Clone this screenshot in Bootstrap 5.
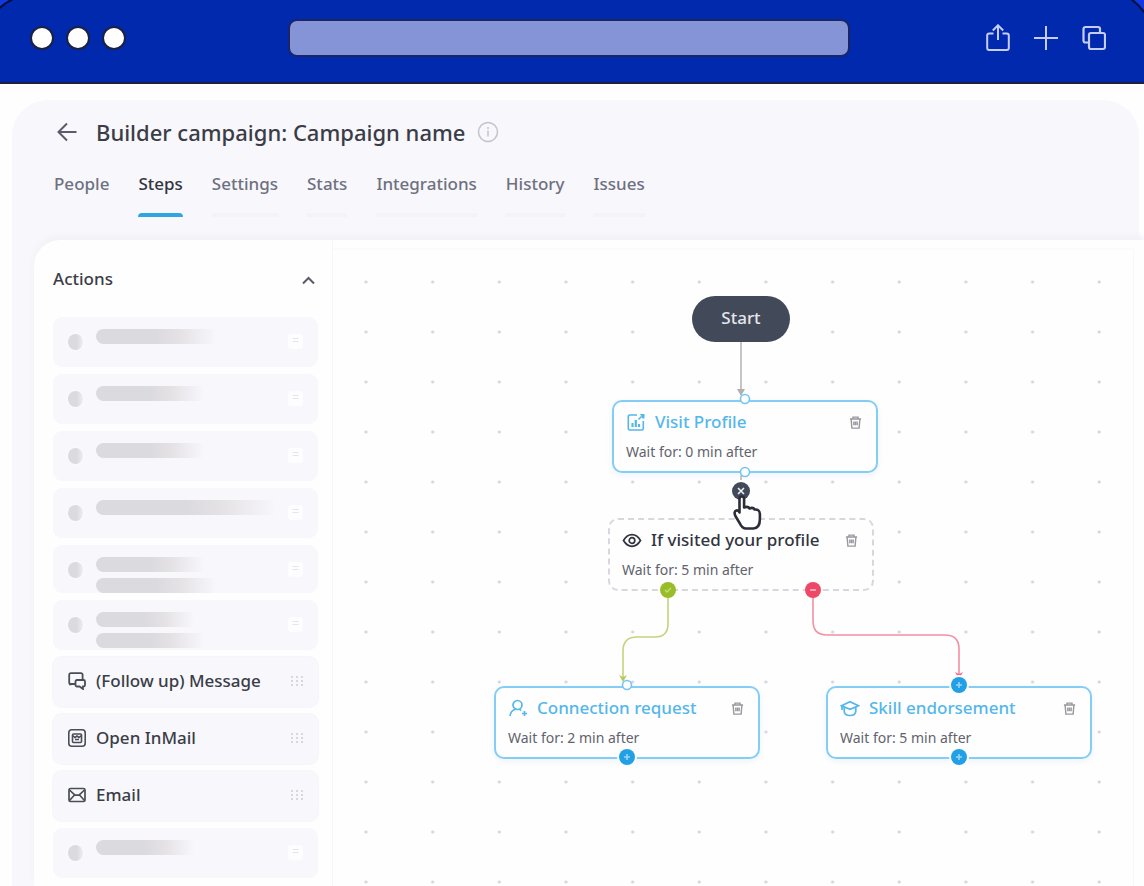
<!DOCTYPE html>
<html lang="en">
<head>
<meta charset="utf-8">
<meta name="viewport" content="width=device-width, initial-scale=1">
<title>Builder campaign</title>
<link href="https://cdn.jsdelivr.net/npm/bootstrap@5.3.0/dist/css/bootstrap.min.css" rel="stylesheet">
<style>
  body { font-family: "Noto Sans", "Open Sans", sans-serif; color: #3a3d46; background: #fefefe; overflow: hidden; }
  .window-bar { background: #0029ad; border-bottom: 2px solid #1b2142; height: 84px; padding: 0 38px 6px 30px; }
  .window-dots { gap: 12px; }
  .window-dot { width: 24px; height: 24px; border-radius: 50%; background: #fff; border: 2px solid #1b2142; }
  .address { width: 562px; height: 38px; margin-left: 26px; border: 2px solid #1b2464; border-radius: 9px; background: #8494d6; }
  .bar-btn { color: #c6cdf8; line-height: 0; }
  .bar-btn svg { width: 24px; height: 28px; }
  .corner { top: 0; width: 24px; height: 24px; }
  .app-panel { margin: 16px 5px 0 12px; background: #f7f7fc; border-radius: 36px 36px 0 0; padding: 16px 0 0 22px; }
  .page-title { font-size: 22px; line-height: 32px; font-weight: 500; }
  .info { margin-left: 12px; }
  .back-link { color: #5a5a6b; margin-left: 22px; margin-right: 18px; line-height: 0; }
  .tabs { margin-left: 20px; gap: 29px; }
  .tabs a { display: block; font-size: 17px; line-height: 24px; font-weight: 500; color: #6e717e; text-decoration: none; padding: 24px 0 17px; border-bottom: 4px solid transparent; position: relative; }
  .tabs a.current { color: #32353f; }
  .tabs a::after { content: ""; position: absolute; left: 0; right: 0; bottom: -4px; height: 4px; background: #f3f3f8; }
  .tabs li:first-child a::after { display: none; }
  .tabs a.current::after { background: #30a5e2; border-radius: 4px 4px 0 0; }
  .workspace { background: #fefefe; border-radius: 26px 0 0 0; margin-right: -5px; margin-top: 23px; box-shadow: 0 -4px 6px #f1f1f6; }
  .side { width: 299px; border-right: 1px solid #f6f6fc; padding: 27px 14px 8px 19px; }
  .side-head { font-size: 17px; line-height: 24px; font-weight: 500; margin-bottom: 26px; }
  .action-list { gap: 7px; }
  .action-card { height: 50px; background: #f7f7fc; border-radius: 9px; padding: 0 15px 2px; font-size: 17px; font-weight: 500; }
  button.action-card { border: 0; text-align: left; color: #3a3d46; box-shadow: 0 0 0 1px #f5f5fa; }
  .short { height: 48px; }
  .action-icon { width: 18px; height: 18px; flex: none; margin-right: 10px; }
  .ghost { padding-top: 12px; }
  .ghost-icon { width: 15px; height: 16px; border-radius: 50%; margin: 5px 13px 0 0; background: linear-gradient(90deg, #dadadf 60%, #eeeef3); box-shadow: 0 0 3px 1px #fcfcfe; }
  .ghost-line { height: 15px; border-radius: 8px 0 0 8px; background: linear-gradient(90deg, #dbdadf 50%, #e5e2e5 70%, #f7f7fc00); margin-bottom: 6px; }
  .w-a { width: 120px; } .w-b { width: 108px; } .w-c { width: 180px; } .w-d { width: 98px; }
  .ghost-grip { width: 15px; height: 15px; border-radius: 3px; background: #fdfdff; color: #e4e4e8; font-size: 12px; line-height: 14px; text-align: center; margin: 5px 0 0 auto; }
  .canvas-edge { border-top: 2px solid #fbfafd; margin: 8px 10px 0 0; border-right: 1px solid #f8f7fd; }
  .flow-canvas { height: 100%; min-height: 600px; background-image: radial-gradient(circle at 33px 34px, #d5d5da 1px, transparent 2px); background-size: 67px 50px; background-repeat: round repeat; background-position: 0 -2px; }
  .stage { position: absolute; inset: 0 auto auto 1px; width: 799px; height: 634px; }
  .links { position: absolute; inset: 0; width: 100%; height: 100%; pointer-events: none; }
  .node { position: absolute; width: 266px; height: 73px; border: 2px solid #84cdf3; border-radius: 10px; background: #fefefe; padding: 8px 14px 0 12px; box-shadow: 0 2px 6px #eef1fb; }
  .node-title { font-size: 17px; line-height: 24px; font-weight: 500; color: #54b7eb; }
  .node-icon { width: 20px; height: 20px; margin-right: 9px; flex: none; }
  .node-wait { font-size: 14px; line-height: 20px; margin-top: 8px; color: #62636c; }
  .trash { color: #98989e; line-height: 0; }
  .trash svg { width: 13px; height: 13px; }
  .node-dashed { border: 2px dashed #d9d7de; box-shadow: none; }
  .node-dashed .node-title { color: #32353f; }
  .start { position: absolute; left: 358px; top: 46px; width: 98px; height: 46px; border: 0; border-radius: 23px; background: #424a5a; color: #e4e6eb; font-size: 17px; line-height: 24px; font-weight: 500; padding: 0 0 2px; }
  #visit { left: 278px; top: 150px; }
  #visited { left: 274px; top: 268px; }
  #connect { left: 160px; top: 436px; }
  #skill { left: 492px; top: 436px; }
  .port { position: absolute; width: 16px; height: 16px; border: 0; padding: 0; border-radius: 50%; background: #22a0e6; color: #9ad4f6; line-height: 0; box-shadow: 0 0 0 2px #fefefe; }
  .port svg { width: 8px; height: 8px; }
  #p-cut { left: 398px; top: 232px; width: 18px; height: 18px; background: #424a5a; color: #eef0f4; }
  #p-yes { left: 326px; top: 332px; background: #98bd28; color: #c5df77; box-shadow: none; }
  #p-no { left: 471px; top: 332px; background: #ee4868; color: #fac0cb; box-shadow: none; }
  #p-connect { left: 285px; top: 499px; }
  #p-skill-in { left: 617px; top: 427px; }
  #p-skill-out { left: 617px; top: 499px; }
</style>
</head>
<body class="min-vh-100 d-flex flex-column">
<svg class="d-none" aria-hidden="true">
  <symbol id="i-trash" viewBox="0 0 14 14"><path d="M1 3.200h12M4.300 3V1.200h5.400V3M2.300 3.600l.8 9.400h7.800l.8-9.400M5.200 6v4M7 6v4M8.800 6v4" fill="none" stroke="currentColor" stroke-width="1.500"/></symbol>
  <symbol id="i-plus" viewBox="0 0 8 8"><path d="M4 1v6M1 4h6" fill="none" stroke="currentColor" stroke-width="1.600"/></symbol>
  <symbol id="i-grip" viewBox="0 0 12 10"><path d="M1 0v2M6 0v2M11 0v2M1 4v2M6 4v2M11 4v2M1 8v2M6 8v2M11 8v2" stroke="#cfcfd6" stroke-width="1.600"/></symbol>
</svg>

<header class="window-bar position-relative d-flex align-items-center justify-content-between flex-shrink-0">
  <svg class="corner position-absolute start-0" viewBox="0 0 24 24"><path d="M0 0H12Q5 3 0 8Z" fill="#1238e0"/><path d="M-1 8.500Q5 3 13-1" fill="none" stroke="#0a0f3a" stroke-width="2"/></svg>
  <svg class="corner position-absolute end-0" viewBox="0 0 24 24"><path d="M24 0H13Q19 5 24 12Z" fill="#1238e0"/><path d="M11-1Q18 4 25 13" fill="none" stroke="#0a0f3a" stroke-width="2"/></svg>
  <div class="window-dots d-flex">
    <span class="window-dot"></span><span class="window-dot"></span><span class="window-dot"></span>
  </div>
  <input class="address" type="text" aria-label="Address">
  <div class="d-flex gap-4">
    <button class="bar-btn btn p-0 border-0" aria-label="Share"><svg viewBox="0 0 24 28" fill="none" stroke="currentColor" stroke-width="2"><path d="M7.500 9.500H3.200a2 2 0 0 0-2 2V24a2 2 0 0 0 2 2H20.800a2 2 0 0 0 2-2V11.500a2 2 0 0 0-2-2H16.500M12 16V1.500M6.800 6.500 12 1.300l5.200 5.200"/></svg></button>
    <button class="bar-btn btn p-0 border-0" aria-label="New tab"><svg viewBox="0 0 24 28" fill="none" stroke="currentColor" stroke-width="2"><path d="M12 2v24M0 14h24"/></svg></button>
    <button class="bar-btn btn p-0 border-0" aria-label="Tabs"><svg viewBox="0 0 24 28" fill="none" stroke="currentColor" stroke-width="2.200"><rect x="7" y="9" width="16" height="16" rx="2"/><path d="M7 18.500H3.500a2 2 0 0 1-2-2V5a2 2 0 0 1 2-2H16a2 2 0 0 1 2 2v4"/></svg></button>
  </div>
</header>

<main class="app-panel flex-grow-1 d-flex flex-column">
  <div class="d-flex align-items-center">
    <a class="back-link" href="#" aria-label="Back"><svg width="22" height="20" viewBox="0 0 22 20" fill="none" stroke="currentColor" stroke-width="2"><path d="M20.500 10H3M11 1.500 2.500 10 11 18.500"/></svg></a>
    <h1 class="page-title mb-0">Builder campaign: Campaign name</h1>
    <svg class="info" width="22" height="22" viewBox="0 0 22 22" fill="none" stroke="#c3c3cb" stroke-width="1.500"><circle cx="11" cy="11" r="9.500"/><path d="M11 9.500v6M11 6v2"/></svg>
  </div>
  <ul class="tabs list-unstyled d-flex mb-0">
    <li><a href="#">People</a></li>
    <li><a href="#" class="current">Steps</a></li>
    <li><a href="#">Settings</a></li>
    <li><a href="#">Stats</a></li>
    <li><a href="#">Integrations</a></li>
    <li><a href="#">History</a></li>
    <li><a href="#">Issues</a></li>
  </ul>

  <section class="workspace flex-grow-1 d-flex">
    <aside class="side flex-shrink-0">
      <div class="side-head d-flex justify-content-between align-items-center">
        <span>Actions</span>
        <button class="btn p-0 border-0 lh-1" aria-label="Collapse"><svg width="19" height="14" viewBox="0 0 19 14" fill="none" stroke="#5a5c64" stroke-width="2"><path d="M4 10.500 9.500 5l5.500 5.500"/></svg></button>
      </div>
      <div class="action-list d-grid">
        <div class="action-card ghost d-flex align-items-start"><i class="ghost-icon"></i><div><div class="ghost-line w-a"></div></div><span class="ghost-grip">=</span></div>
        <div class="action-card ghost d-flex align-items-start"><i class="ghost-icon"></i><div><div class="ghost-line w-b"></div></div><span class="ghost-grip">=</span></div>
        <div class="action-card ghost d-flex align-items-start"><i class="ghost-icon"></i><div><div class="ghost-line w-b"></div></div><span class="ghost-grip">=</span></div>
        <div class="action-card ghost d-flex align-items-start"><i class="ghost-icon"></i><div><div class="ghost-line w-c"></div></div><span class="ghost-grip">=</span></div>
        <div class="action-card ghost short d-flex align-items-start"><i class="ghost-icon"></i><div><div class="ghost-line w-b"></div><div class="ghost-line w-a mb-0"></div></div><span class="ghost-grip">=</span></div>
        <div class="action-card ghost d-flex align-items-start"><i class="ghost-icon"></i><div><div class="ghost-line w-d"></div><div class="ghost-line w-b mb-0"></div></div><span class="ghost-grip">=</span></div>
        <button class="action-card d-flex align-items-center"><svg class="action-icon" viewBox="0 0 18 18" fill="none" stroke="#4b4d57" stroke-width="1.800"><path d="M4 13V12H2.800a1.600 1.600 0 0 1-1.600-1.600V2.800A1.600 1.600 0 0 1 2.800 1.200H13a1.600 1.600 0 0 1 1.600 1.600V7"/><path d="M1.300 12.500 4 12h3"/><path d="M9 8h6.500a1.500 1.500 0 0 1 1.500 1.500V13a1.500 1.500 0 0 1-1.500 1.500H15V17l-3.500-2.500H9A1.500 1.500 0 0 1 7.500 13V9.500A1.500 1.500 0 0 1 9 8Z"/></svg><span>(Follow up) Message</span><svg class="ms-auto" width="12" height="10"><use href="#i-grip"/></svg></button>
        <button class="action-card d-flex align-items-center"><svg class="action-icon" viewBox="0 0 18 18" fill="none" stroke="#4b4d57" stroke-width="1.600"><rect x=".8" y=".8" width="16.400" height="16.400" rx="3"/><rect x="4.500" y="5" width="9" height="8.500" rx="1"/><path d="M4.500 6.500 7 8.500l2-1.500 2 1.500 2.500-2M7 10.500h4"/></svg><span>Open InMail</span><svg class="ms-auto" width="12" height="10"><use href="#i-grip"/></svg></button>
        <button class="action-card d-flex align-items-center"><svg class="action-icon" viewBox="0 0 18 18" fill="none" stroke="#4b4d57" stroke-width="1.700"><rect x="1" y="2.500" width="16" height="13" rx="1.500"/><path d="M1.500 4 7 9.200h4L16.500 4M1.500 14.500 6.500 9M16.500 14.500l-5-5.500"/></svg><span>Email</span><svg class="ms-auto" width="12" height="10"><use href="#i-grip"/></svg></button>
        <div class="action-card ghost d-flex align-items-start"><i class="ghost-icon"></i><div><div class="ghost-line w-d"></div></div><span class="ghost-grip">=</span></div>
      </div>
    </aside>

    <div class="canvas-edge flex-grow-1">
      <div class="flow-canvas position-relative">
        <div class="stage">
          <button class="start">Start</button>

          <article class="node" id="visit">
            <div class="node-title d-flex align-items-center">
              <svg class="node-icon" viewBox="0 0 20 20" fill="none" stroke="currentColor" stroke-width="1.600"><path d="M11 3H3.800A1.500 1.500 0 0 0 2.300 4.500v12A1.500 1.500 0 0 0 3.800 18h12a1.500 1.500 0 0 0 1.500-1.500V9"/><path d="M6.500 15v-4M9.800 15V8M13 15v-3" stroke-width="2.200"/><path d="m12.500 7.500 3-3"/><path d="M14 2h4.500v4.500h-2z" fill="currentColor" stroke="none"/></svg>
              <span>Visit Profile</span><button class="trash btn p-0 border-0 ms-auto" aria-label="Delete"><svg><use href="#i-trash"/></svg></button>
            </div>
            <div class="node-wait">Wait for: 0 min after</div>
          </article>

          <article class="node node-dashed" id="visited">
            <div class="node-title d-flex align-items-center">
              <svg class="node-icon" viewBox="0 0 20 20" fill="none" stroke="currentColor" stroke-width="1.700"><path d="M1.500 10.500Q5 4.700 10 4.700t8.500 5.800Q15 16.300 10 16.300t-8.500-5.800Z"/><circle cx="10" cy="10.500" r="2.800"/></svg>
              <span>If visited your profile</span><button class="trash btn p-0 border-0 ms-auto" aria-label="Delete"><svg><use href="#i-trash"/></svg></button>
            </div>
            <div class="node-wait">Wait for: 5 min after</div>
          </article>

          <article class="node" id="connect">
            <div class="node-title d-flex align-items-center">
              <svg class="node-icon" viewBox="0 0 20 20" fill="none" stroke="currentColor" stroke-width="1.700"><circle cx="9.500" cy="7" r="4.500"/><path d="M2 18q.5-5 5-6.500M11.500 11.200l1.500 1.300M16.500 13v5M14 15.500h5"/></svg>
              <span>Connection request</span><button class="trash btn p-0 border-0 ms-auto" aria-label="Delete"><svg><use href="#i-trash"/></svg></button>
            </div>
            <div class="node-wait">Wait for: 2 min after</div>
          </article>

          <article class="node" id="skill">
            <div class="node-title d-flex align-items-center">
              <svg class="node-icon" viewBox="0 0 20 20" fill="none" stroke="currentColor" stroke-width="1.700"><path d="M1.500 7.800 10 3.700l8.500 4.100L10 11.300ZM4.200 9.500V13q0 4.500 5.800 4.500t5.800-4.500V9.500M2 8v4"/></svg>
              <span>Skill endorsement</span><button class="trash btn p-0 border-0 ms-auto" aria-label="Delete"><svg><use href="#i-trash"/></svg></button>
            </div>
            <div class="node-wait">Wait for: 5 min after</div>
          </article>

          <svg class="links" viewBox="334 250 799 634" fill="none" stroke-width="1.600">
            <path d="M741 342V395M741 486V476l3-3" stroke="#b7b7bb"/>
            <path d="M737 389h8l-4 7z" fill="#b0b0b4"/>
            <path d="M668 597V624Q668 637 655 637H637Q623 637 623 651V680" stroke="#c3d57c"/>
            <path d="M619 675l4 2 4-2-4 7z" fill="#b3ca5c"/>
            <path d="M813 597V621Q813 635 827 635H945Q959 635 959 649V678" stroke="#f38fa2"/>
            <path d="M955 672l4 2 4-2-4 7z" fill="#ee6f88"/>
            <g fill="#fefefe" stroke="#74c6f1"><circle cx="745" cy="399" r="4.500"/><circle cx="745" cy="472" r="4.500"/><circle cx="627" cy="685" r="4.500"/></g>
          </svg>

          <button class="port" id="p-cut" aria-label="Remove link"><svg viewBox="0 0 8 8"><path d="m1 1 6 6M7 1 1 7" stroke="currentColor" stroke-width="1.600"/></svg></button>
          <button class="port" id="p-yes" aria-label="Yes branch"><svg viewBox="0 0 8 8" fill="none"><path d="m1 4 2 2 4-4" stroke="currentColor" stroke-width="1.300"/></svg></button>
          <button class="port" id="p-no" aria-label="No branch"><svg viewBox="0 0 8 8"><path d="M1 4h6" stroke="currentColor" stroke-width="1.500"/></svg></button>
          <button class="port" id="p-connect" aria-label="Add step"><svg><use href="#i-plus"/></svg></button>
          <button class="port" id="p-skill-in" aria-label="Add step before"><svg><use href="#i-plus"/></svg></button>
          <button class="port" id="p-skill-out" aria-label="Add step after"><svg><use href="#i-plus"/></svg></button>

          <svg class="links" viewBox="334 250 799 634">
            <path d="M739.500 499q0-2.500 2.300-2.500t2.300 2.500v8.500q4-1.500 5.500 1 3.500-1.500 5 1 5-.5 5.300 4.500v5q0 9-6.500 9.500h-8q-3.500-.5-5.500-5l-4.500-7.500q-2-4.500 1-5.500 1.800-.5 3.100 2Z" fill="#fefefe" stroke="#2c2d36" stroke-width="2.600" stroke-linejoin="round"/>
          </svg>
        </div>
      </div>
    </div>
  </section>
</main>
<script src="https://cdn.jsdelivr.net/npm/bootstrap@5.3.0/dist/js/bootstrap.bundle.min.js"></script>
</body>
</html>
